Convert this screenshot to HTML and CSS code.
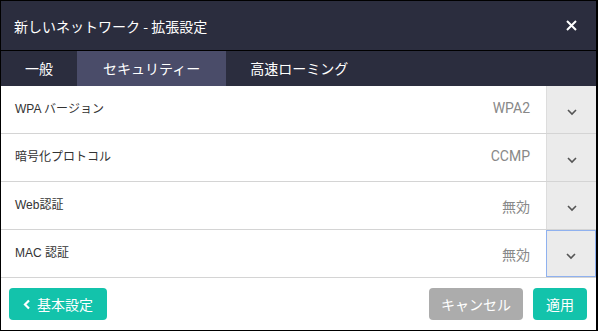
FILE: index.html
```html
<!DOCTYPE html>
<html lang="ja">
<head>
    <meta charset="UTF-8">
    <title>新しいネットワーク - 拡張設定</title>
    <link rel="stylesheet" href="styles.css">
</head>
<body>
    <div class="dialog">
        <div class="header">
            <span class="title">新しいネットワーク - 拡張設定</span>
            <span class="close"><svg width="11" height="11" viewBox="0 0 11 11"><path d="M1 1l9 9M10 1l-9 9" stroke="#fff" stroke-width="2"/></svg></span>
        </div>
        <div class="tabs">
            <div class="tab">一般</div>
            <div class="tab active">セキュリティー</div>
            <div class="tab">高速ローミング</div>
        </div>
        <div class="rows">
            <div class="row">
                <div class="label">WPA バージョン</div>
                <div class="value">WPA2</div>
                <div class="drop"><svg width="12" height="8" viewBox="0 0 12 8"><path d="M2 2l4 4 4-4" fill="none" stroke="#555" stroke-width="1.6"/></svg></div>
            </div>
            <div class="row">
                <div class="label">暗号化プロトコル</div>
                <div class="value">CCMP</div>
                <div class="drop"><svg width="12" height="8" viewBox="0 0 12 8"><path d="M2 2l4 4 4-4" fill="none" stroke="#555" stroke-width="1.6"/></svg></div>
            </div>
            <div class="row">
                <div class="label">Web認証</div>
                <div class="value">無効</div>
                <div class="drop"><svg width="12" height="8" viewBox="0 0 12 8"><path d="M2 2l4 4 4-4" fill="none" stroke="#555" stroke-width="1.6"/></svg></div>
            </div>
            <div class="row">
                <div class="label">MAC 認証</div>
                <div class="value">無効</div>
                <div class="drop focus"><svg width="12" height="8" viewBox="0 0 12 8"><path d="M2 2l4 4 4-4" fill="none" stroke="#555" stroke-width="1.6"/></svg></div>
            </div>
        </div>
        <div class="footer">
            <button class="btn primary back"><svg width="8" height="11" viewBox="0 0 8 11"><path d="M6 1.5L2 5.5l4 4" fill="none" stroke="#fff" stroke-width="2.2"/></svg>基本設定</button>
            <div class="spacer"></div>
            <button class="btn gray">キャンセル</button>
            <button class="btn primary">適用</button>
        </div>
    </div>
</body>
</html>
```

FILE: styles.css
```css
body {
    margin: 0;
    font-family: "Noto Sans CJK JP", "Noto Sans", sans-serif;
    background: #fff;
}
.dialog {
    width: 598px;
    height: 331px;
    box-sizing: border-box;
    border: 1px solid #000;
    border-right-width: 2px;
    display: flex;
    flex-direction: column;
}
.header {
    height: 49px;
    background: #2b2d3e;
    color: #fff;
    display: flex;
    align-items: center;
    justify-content: space-between;
    padding: 0 19px 0 13px;
    border-bottom: 1px solid #000;
}
.title {
    font-size: 14px;
}
.close {
    display: flex;
}
.tabs {
    height: 35px;
    background: #2b2d3e;
    display: flex;
}
.tab {
    color: #fff;
    font-size: 14px;
    line-height: 35px;
    padding: 0 24px;
}
.tab.active {
    background: #4a4c69;
    padding: 0 26px;
}
.rows {
    display: flex;
    flex-direction: column;
}
.row {
    height: 47px;
    border-bottom: 1px solid #d4d4d4;
    display: flex;
    align-items: stretch;
}
.label {
    flex: 1;
    font-family: "Liberation Sans", "Noto Sans CJK JP", sans-serif;
    font-size: 12px;
    color: #333;
    padding: 13px 0 0 14px;
}
.value {
    font-family: "Roboto", "Noto Sans CJK JP", sans-serif;
    font-size: 14px;
    color: #888;
    padding-top: 14px;
    padding-right: 16px;
}
.drop {
    width: 49px;
    background: #ebebeb;
    border-left: 1px solid #ddd;
    display: flex;
    align-items: center;
    justify-content: center;
    padding-top: 4px;
}
.drop.focus {
    border: 1px solid #8fb1ef;
    width: 50px;
    box-sizing: border-box;
}
.footer {
    flex: 1;
    display: flex;
    align-items: center;
    padding: 0 9px 0 8px;
    gap: 10px;
}
.spacer {
    flex: 1;
}
.btn {
    height: 32px;
    border: none;
    border-radius: 4px;
    color: #fff;
    font-family: "Noto Sans CJK JP", sans-serif;
    font-size: 14px;
    padding: 0 13px;
    display: flex;
    align-items: center;
    gap: 6px;
}
.primary {
    background: #13c3ab;
}
.gray {
    background: #acacac;
    padding: 0 12px;
}
.back {
    padding: 0 14px;
}
```
